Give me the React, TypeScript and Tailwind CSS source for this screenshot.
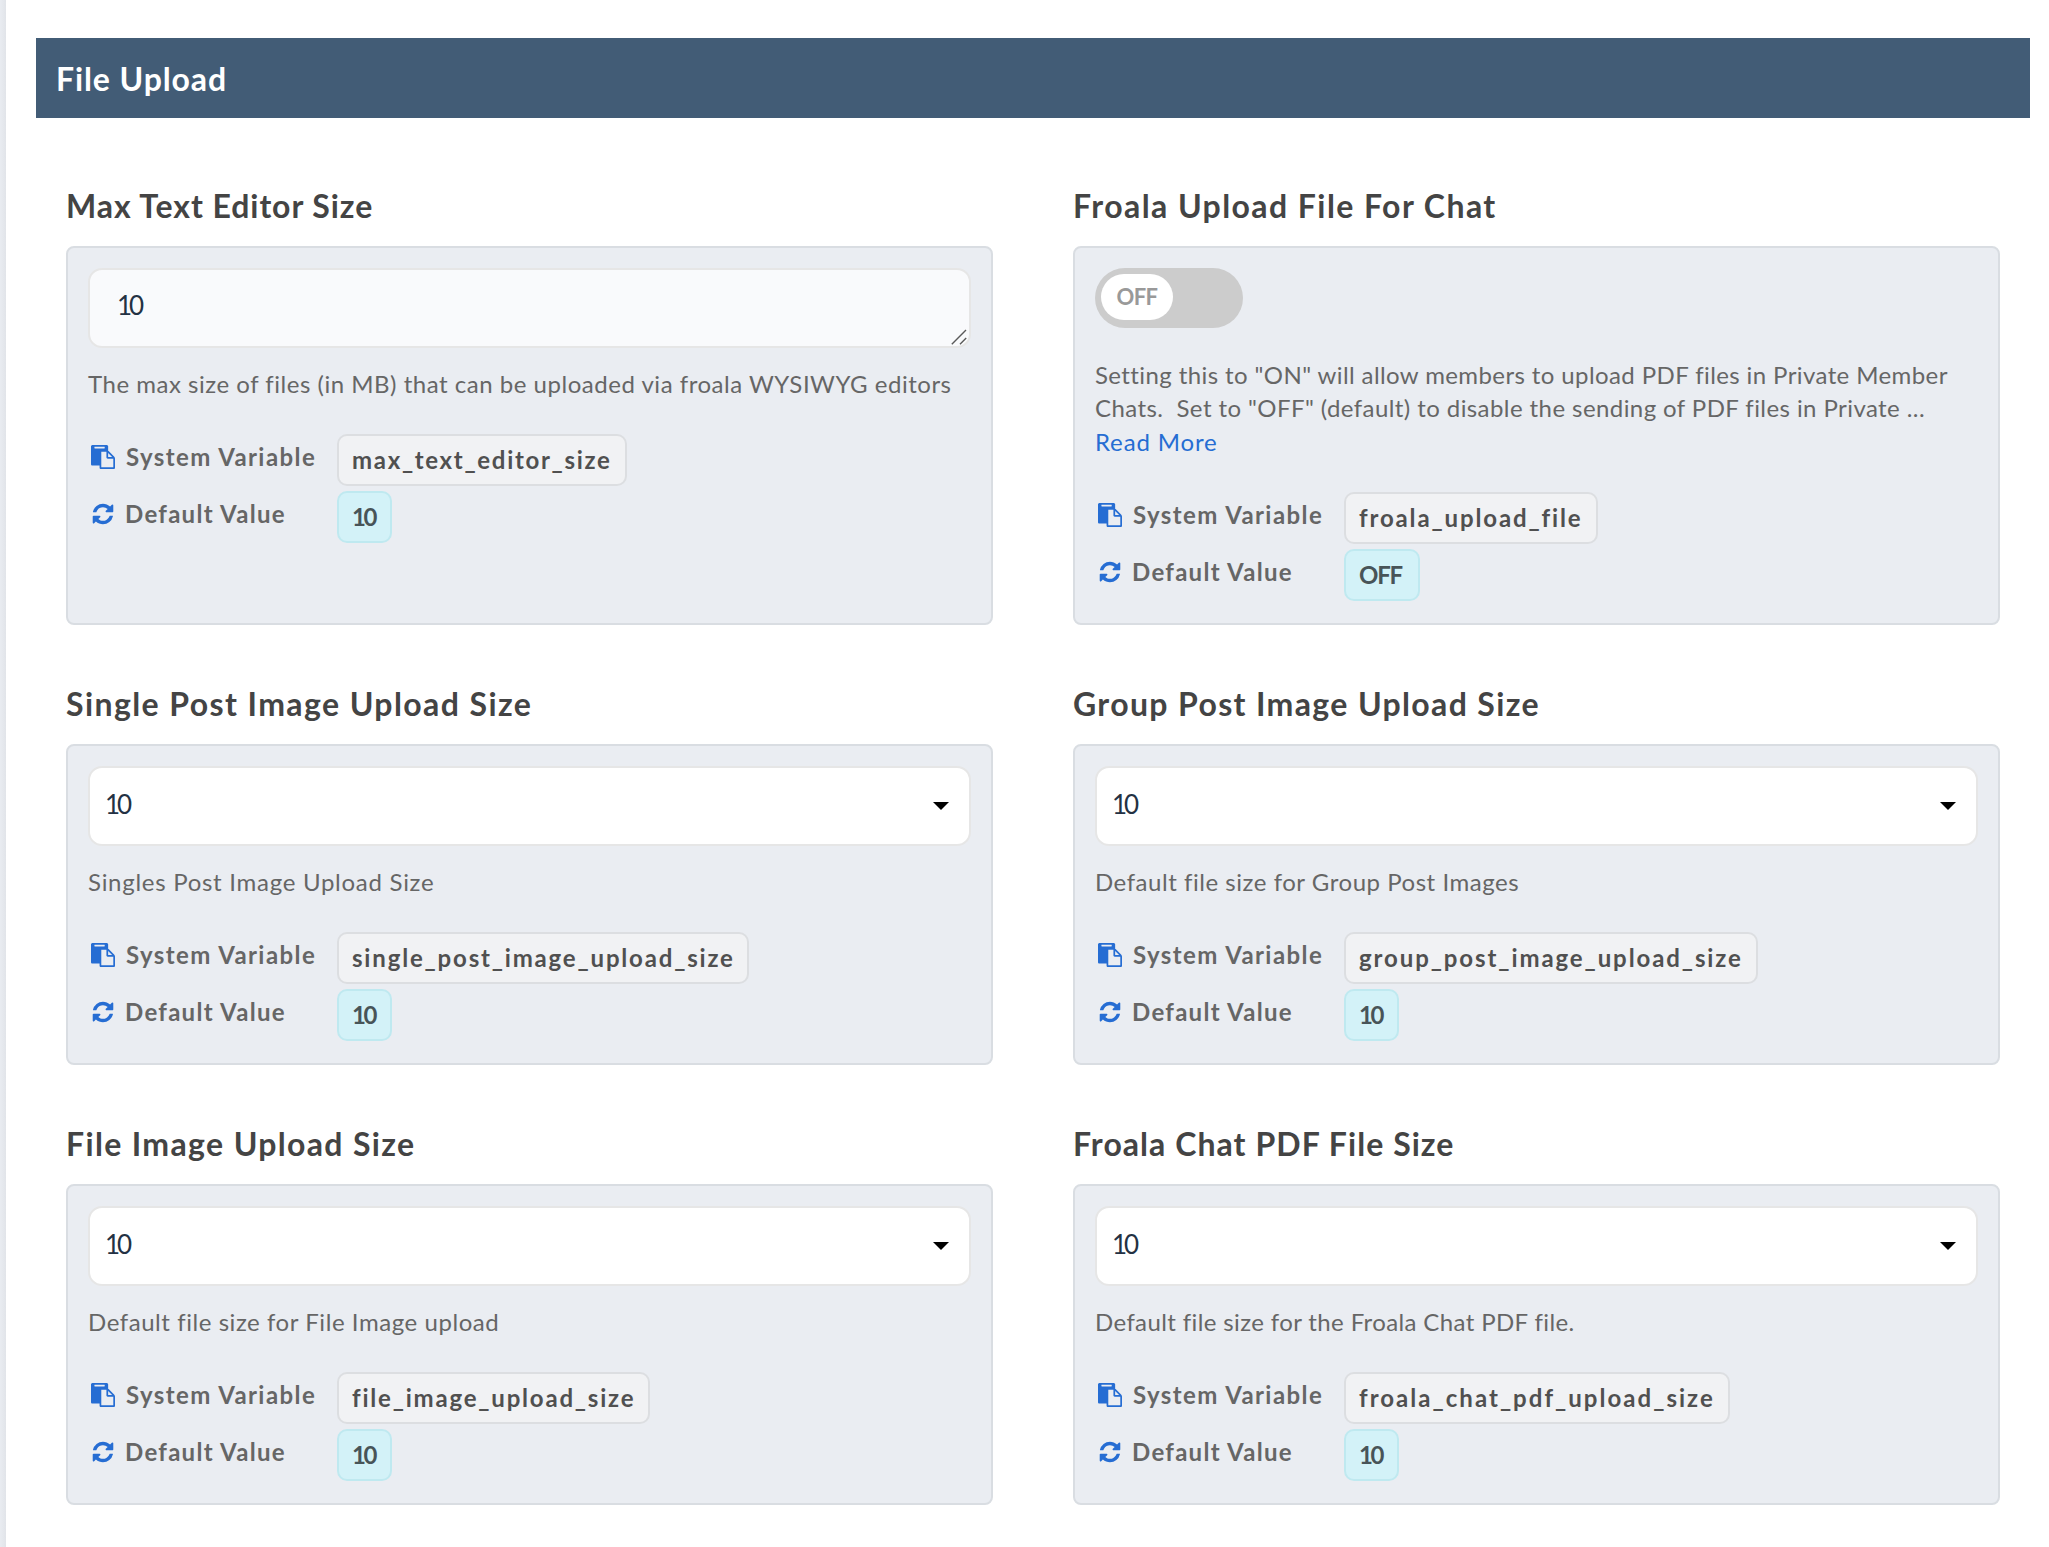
import type { ReactNode } from "react";

type Field = {
  title: string;
  titleTracking: string;
  control: "textarea" | "toggle" | "select";
  description: ReactNode;
  variable: string;
  variableClass: string;
  value: string;
};

const FIELDS: Field[] = [
  {
    title: "Max Text Editor Size",
    titleTracking: "tracking-[0.93px]",
    control: "textarea",
    description: (
      <span className="tracking-[0.52px]">
        The max size of files (in MB) that can be uploaded via froala WYSIWYG editors
      </span>
    ),
    variable: "max_text_editor_size",
    variableClass: "w-[290px] tracking-[1.69px]",
    value: "10",
  },
  {
    title: "Froala Upload File For Chat",
    titleTracking: "tracking-[1.43px]",
    control: "toggle",
    description: (
      <>
        <span className="block tracking-[0.4px]">
          Setting this to "ON" will allow members to upload PDF files in Private Member
        </span>
        <span className="block tracking-[0.42px]">
          Chats.&nbsp; Set to "OFF" (default) to disable the sending of PDF files in Private ...
        </span>
        <a className="block tracking-[0.85px] text-[#266dd3]">Read More</a>
      </>
    ),
    variable: "froala_upload_file",
    variableClass: "w-[254px] tracking-[1.86px]",
    value: "OFF",
  },
  {
    title: "Single Post Image Upload Size",
    titleTracking: "tracking-[1.41px]",
    control: "select",
    description: <span className="tracking-[0.72px]">Singles Post Image Upload Size</span>,
    variable: "single_post_image_upload_size",
    variableClass: "w-[412px] tracking-[1.82px]",
    value: "10",
  },
  {
    title: "Group Post Image Upload Size",
    titleTracking: "tracking-[1.36px]",
    control: "select",
    description: <span className="tracking-[0.54px]">Default file size for Group Post Images</span>,
    variable: "group_post_image_upload_size",
    variableClass: "w-[414px] tracking-[1.9px]",
    value: "10",
  },
  {
    title: "File Image Upload Size",
    titleTracking: "tracking-[1.35px]",
    control: "select",
    description: <span className="tracking-[0.56px]">Default file size for File Image upload</span>,
    variable: "file_image_upload_size",
    variableClass: "w-[313px] tracking-[1.8px]",
    value: "10",
  },
  {
    title: "Froala Chat PDF File Size",
    titleTracking: "tracking-[1.05px]",
    control: "select",
    description: <span className="tracking-[0.38px]">Default file size for the Froala Chat PDF file.</span>,
    variable: "froala_chat_pdf_upload_size",
    variableClass: "w-[386px] tracking-[2.03px]",
    value: "10",
  },
];

function PasteIcon() {
  return (
    <svg viewBox="0 0 1792 1792" className="size-6 shrink-0 fill-[#266dd3]">
      <path d="M768 1664h896v-640h-416q-40 0-68-28t-28-68v-416h-384v1152zm256-1440v-64q0-13-9.5-22.5t-22.5-9.5h-704q-13 0-22.5 9.5t-9.5 22.5v64q0 13 9.5 22.5t22.5 9.5h704q13 0 22.5-9.5t9.5-22.5zm256 672h299l-299-299v299zm512 128v672q0 40-28 68t-68 28h-960q-40 0-68-28t-28-68v-160h-544q-40 0-68-28t-28-68v-1344q0-40 28-68t68-28h1088q40 0 68 28t28 68v328q21 13 36 28l408 408q28 28 48 76t20 88z" />
    </svg>
  );
}

function RefreshIcon() {
  return (
    <svg viewBox="0 0 1792 1792" className="size-6 shrink-0 fill-[#266dd3]">
      <path d="M1639 1056q0 5-1 7-64 268-268 434.5t-478 166.5q-146 0-282.5-55t-243.5-157l-129 129q-19 19-45 19t-45-19-19-45v-448q0-26 19-45t45-19h448q26 0 45 19t19 45-19 45l-137 137q71 66 161 102t187 36q134 0 250-65t186-179q11-17 53-117 8-23 30-23h192q13 0 22.5 9.5t9.5 22.5zm25-800v448q0 26-19 45t-45 19h-448q-26 0-45-19t-19-45 19-45l138-138q-148-137-349-137-134 0-250 65t-186 179q-11 17-53 117-8 23-30 23h-199q-13 0-22.5-9.5t-9.5-22.5v-7q65-268 270-434.5t480-166.5q146 0 284 55.5t245 156.5l130-129q19-19 45-19t45 19 19 45z" />
    </svg>
  );
}

function TextareaControl() {
  return (
    <div className="relative h-20 rounded-[14px] border-2 border-[#e6e6e6] bg-[#f9fafc] pt-4 pl-[27px] text-[26px] leading-[38px] tracking-[-3px] text-[#233143]">
      10
      <svg viewBox="0 0 16 16" className="absolute right-[2px] bottom-[1px] size-4">
        <path d="M0.8 15.2 15 1M9 15.2 15.2 9" stroke="#5a5a5a" strokeWidth="1.4" fill="none" />
      </svg>
    </div>
  );
}

function SelectControl() {
  return (
    <div className="flex h-20 items-center justify-between rounded-[14px] border-2 border-[#e6e6e6] bg-white pr-5 pl-[15px] text-[26px] text-[#233143]">
      <span className="pb-0.5 tracking-[-3px]">10</span>
      <svg viewBox="0 0 16 8" className="h-2 w-4">
        <path d="M0 0h16L8 8z" />
      </svg>
    </div>
  );
}

function ToggleControl() {
  return (
    <div className="mb-[11px] h-[60px] w-[148px] rounded-full bg-[#cccccc] pt-[6px] pl-[6px]">
      <div className="flex h-[46px] w-[72px] items-center justify-center rounded-full bg-white pb-px text-[22px] font-bold tracking-[-0.6px] text-[#999999]">
        OFF
      </div>
    </div>
  );
}

function Setting({ field }: { field: Field }) {
  return (
    <section className="flex flex-col">
      <h2 className={`mb-5 h-10 text-[32px] leading-10 font-bold whitespace-nowrap text-[#444444] ${field.titleTracking}`}>
        {field.title}
      </h2>
      <div className="flex flex-1 flex-col rounded-lg border-2 border-[#d9dde2] bg-[#eaedf2] px-5 pt-5 pb-[22px]">
        {field.control === "textarea" && <TextareaControl />}
        {field.control === "toggle" && <ToggleControl />}
        {field.control === "select" && <SelectControl />}
        <div className="mt-[19px] mb-[33.6px] text-2xl leading-[33.4px] whitespace-nowrap text-[#666666]">
          {field.description}
        </div>
        <div className="flex flex-col gap-[5px] text-2xl font-bold whitespace-nowrap text-[#666666]">
          <div className="flex h-[52px]">
            <div className="flex w-[249px] items-center gap-[11px] pb-[6px] pl-[3px]">
              <PasteIcon />
              <span className="tracking-[1.42px]">System Variable</span>
            </div>
            <div className={`flex items-center rounded-[10px] border-2 border-[#dcdee1] bg-[#f1f2f4] pl-[13px] text-[#505050] ${field.variableClass}`}>
              {field.variable}
            </div>
          </div>
          <div className="flex h-[52px]">
            <div className="flex w-[249px] items-center gap-[10px] pb-[6px] pl-[3px]">
              <RefreshIcon />
              <span className="tracking-[1.28px]">Default Value</span>
            </div>
            <div
              className={`flex items-center rounded-[10px] border-2 border-[#bfe9f0] bg-[#d3f2f8] pl-[13px] text-[#485458] ${
                field.value === "OFF" ? "w-[76px] tracking-[-1.2px]" : "w-[55px] tracking-[-2.5px]"
              }`}
            >
              {field.value}
            </div>
          </div>
        </div>
      </div>
    </section>
  );
}

export default function App() {
  return (
    <div className="flex h-[1547px] w-[2049px] overflow-hidden bg-white font-['Lato','Open_Sans',sans-serif]">
      <aside className="w-[6px] shrink-0 bg-linear-to-r from-[#e9ecf1] to-[#e1e4e9]" />
      <main className="flex-1 pt-[38px] pr-[19px] pl-[30px]">
        <header className="flex h-20 items-center bg-[#425c76] pt-px pl-5 text-[32px] font-bold tracking-[0.9px] text-white">
          File Upload
        </header>
        <div className="grid grid-cols-[927px_927px] gap-x-20 gap-y-[59px] pt-[68px] pl-[30px]">
          {FIELDS.map((field) => (
            <Setting key={field.variable} field={field} />
          ))}
        </div>
      </main>
    </div>
  );
}
